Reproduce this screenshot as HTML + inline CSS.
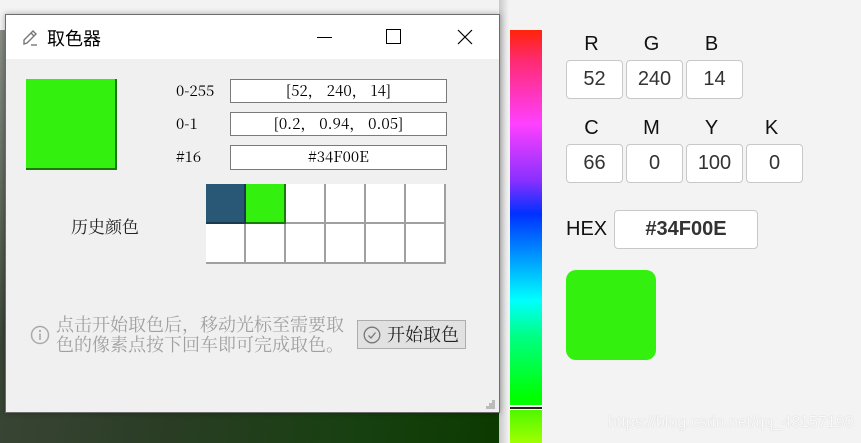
<!DOCTYPE html>
<html><head><meta charset="utf-8"><style>
*{margin:0;padding:0;box-sizing:border-box}
body{width:861px;height:443px;background:#f3f3f3;position:relative;overflow:hidden;font-family:"Liberation Sans","Noto Sans CJK SC",sans-serif}
.a{position:absolute}
.cjk{font-family:"Noto Serif CJK SC","Liberation Serif",serif}
.inp{position:absolute;background:#fff;border:1px solid #7a7a7a;font-family:"Noto Serif CJK SC","Liberation Serif",serif;font-size:15px;text-align:center;line-height:21px;color:#000}
.lbl{position:absolute;font-family:"Noto Serif CJK SC","Liberation Serif",serif;font-size:15px;color:#000}
.cell{position:absolute;width:40px;height:40px;background:#fff;border-right:2px solid #a0a0a0;border-bottom:2px solid #a0a0a0}
.box{position:absolute;background:#fff;border:1px solid #c8c8c8;border-radius:4px;font-size:20px;color:#333;text-align:center;line-height:36px;height:39px;width:57px}
.L{position:absolute;font-size:20px;color:#111;width:57px;text-align:center}
</style></head><body>
<div class="a" style="left:0;top:30px;width:499px;height:413px;background:linear-gradient(100deg,#8a9088 0%,#3a4535 10%,#2a3d25 40%,#174010 75%,#0c3a00 100%)"></div>
<div class="a" style="left:499px;top:0;width:10px;height:443px;background:linear-gradient(90deg,#c8c8c8,#f3f3f3)"></div>
<div class="a" style="left:5px;top:14px;width:495px;height:399px;background:#f0f0f0;border:1px solid #6d6d6d;box-shadow:0 0 6px rgba(0,0,0,.3)">
 <div class="a" style="left:0;top:0;width:493px;height:44px;background:#fff"></div>
 <svg class="a" style="left:15px;top:13px" width="20" height="20" viewBox="0 0 20 20" fill="none" stroke="#777" stroke-width="1.4"><path d="M3 16 L3 12 L12 3 L15 6 L6 15 Z M10 5 L13 8"/><path d="M10 17 H16"/></svg>
 <div class="a" style="left:41px;top:10px;font-size:18px;font-family:'Noto Sans CJK SC',sans-serif;color:#000">取色器</div>
 <div class="a" style="left:311px;top:22px;width:15px;height:1px;background:#000"></div>
 <div class="a" style="left:380px;top:14px;width:15px;height:15px;border:1px solid #000"></div>
 <svg class="a" style="left:451px;top:14px" width="16" height="16"><path d="M1 1L15 15M15 1L1 15" stroke="#000" stroke-width="1.2"/></svg>
 <div class="a" style="left:20px;top:64px;width:91px;height:91px;background:#34f00e;border-right:2px solid #1a7a07;border-bottom:2px solid #1a7a07"></div>
 <div class="lbl" style="left:170px;top:65px">0-255</div>
 <div class="lbl" style="left:170px;top:98px">0-1</div>
 <div class="lbl" style="left:170px;top:131px">#16</div>
 <div class="inp" style="left:224px;top:64px;width:217px;height:24px">[52，&nbsp;240，&nbsp;14]</div>
 <div class="inp" style="left:224px;top:97px;width:217px;height:24px">[0.2，&nbsp;0.94，&nbsp;0.05]</div>
 <div class="inp" style="left:224px;top:130px;width:217px;height:25px">#34F00E</div>
 <div class="a cjk" style="left:65px;top:198px;font-size:17px;color:#222">历史颜色</div>
 <div class="a" style="left:200px;top:169px;width:240px;height:80px">
  <div class="cell" style="left:0;top:0;background:#285876;border-color:#1a3a50"></div>
  <div class="cell" style="left:40px;top:0;background:#34f00e;border-color:#1a7a07"></div>
  <div class="cell" style="left:80px;top:0"></div><div class="cell" style="left:120px;top:0"></div><div class="cell" style="left:160px;top:0"></div><div class="cell" style="left:200px;top:0"></div>
  <div class="cell" style="left:0;top:40px"></div><div class="cell" style="left:40px;top:40px"></div><div class="cell" style="left:80px;top:40px"></div><div class="cell" style="left:120px;top:40px"></div><div class="cell" style="left:160px;top:40px"></div><div class="cell" style="left:200px;top:40px"></div>
 </div>
 <svg class="a" style="left:24px;top:310px" width="20" height="20"><circle cx="10" cy="10" r="8.5" fill="none" stroke="#aaa" stroke-width="1.5"/><path d="M10 8.5V15" stroke="#aaa" stroke-width="1.6"/><circle cx="10" cy="6" r="1.1" fill="#aaa"/></svg>
 <div class="a cjk" style="left:50px;top:299px;font-size:18px;line-height:20px;color:#a0a0a0;width:300px;white-space:nowrap">点击开始取色后，移动光标至需要取<br>色的像素点按下回车即可完成取色。</div>
 <div class="a" style="left:351px;top:305px;width:109px;height:29px;background:#e1e1e1;border:1px solid #adadad"></div>
 <svg class="a" style="left:357px;top:311px" width="18" height="18"><circle cx="9" cy="9" r="7.8" fill="none" stroke="#777" stroke-width="1.3"/><path d="M5.5 9.5L8 12L12.5 6.5" fill="none" stroke="#777" stroke-width="1.3"/></svg>
 <div class="a cjk" style="left:381px;top:306px;font-size:18px;color:#222">开始取色</div>
 <svg class="a" style="left:480px;top:385px" width="10" height="10" fill="#bbb"><rect x="6" y="0" width="3" height="3"/><rect x="3" y="3" width="3" height="3"/><rect x="6" y="3" width="3" height="3"/><rect x="0" y="6" width="3" height="3"/><rect x="3" y="6" width="3" height="3"/><rect x="6" y="6" width="3" height="3"/></svg>
</div>
<div class="a" style="left:510px;top:30px;width:32px;height:375px;background:linear-gradient(#ff2408 0%,#ff2a70 8%,#ff40ff 25%,#8a30ff 40%,#0030ff 49%,#00c0ff 65%,#00ffff 72%,#00ff80 82%,#00ff00 98%)"></div>
<div class="a" style="left:510px;top:405px;width:32px;height:5px;background:#fff;border-top:1px solid #fff"><div style="margin-top:1px;height:2px;background:#222"></div></div>
<div class="a" style="left:510px;top:410px;width:32px;height:33px;background:linear-gradient(#50f800,#a0ff00)"></div>
<div class="L" style="left:563px;top:33px">R</div><div class="L" style="left:623px;top:33px">G</div><div class="L" style="left:683px;top:33px">B</div>
<div class="box" style="left:566px;top:60px">52</div><div class="box" style="left:626px;top:60px">240</div><div class="box" style="left:686px;top:60px">14</div>
<div class="L" style="left:563px;top:117px">C</div><div class="L" style="left:623px;top:117px">M</div><div class="L" style="left:683px;top:117px">Y</div><div class="L" style="left:743px;top:117px">K</div>
<div class="box" style="left:566px;top:144px">66</div><div class="box" style="left:626px;top:144px">0</div><div class="box" style="left:686px;top:144px">100</div><div class="box" style="left:746px;top:144px">0</div>
<div class="a" style="left:566px;top:218px;font-size:20px;color:#111">HEX</div>
<div class="box" style="left:614px;top:210px;width:144px;font-weight:bold;color:#333">#34F00E</div>
<div class="a" style="left:566px;top:270px;width:90px;height:90px;background:#34f00e;border-radius:10px"></div>
<div class="a" style="left:608px;top:414px;font-size:16px;color:#fafafa;text-shadow:0 0 1px #bbb">https://blog.csdn.net/qq_43157190</div>
</body></html>
